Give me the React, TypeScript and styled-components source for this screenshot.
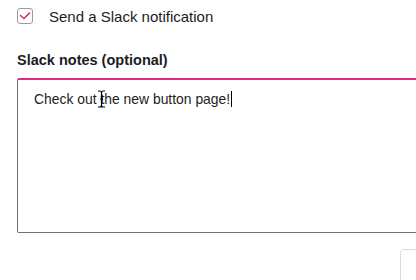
import React from "react";
import styled, { createGlobalStyle } from "styled-components";

const Global = createGlobalStyle`
  html, body { margin: 0; padding: 0; background: #fff; }
  body { font-family: "Liberation Sans", Arial, sans-serif; color: #1d1c1d; overflow: hidden; }
`;

const Page = styled.div`
  width: 416px;
  height: 280px;
  overflow: hidden;
  padding: 8px 0 0 17px;
  box-sizing: border-box;
  display: flex;
  flex-direction: column;
`;

const CheckRow = styled.label`
  display: flex;
  align-items: center;
  gap: 16px;
  height: 16px;
  flex: none;
  font-size: 15px;
  color: #1d1c1d;
`;

const Box = styled.span`
  width: 14px;
  height: 14px;
  border: 1px solid #9b9b9b;
  border-radius: 3px;
  display: flex;
  align-items: center;
  justify-content: center;
  flex: none;
`;

const FieldLabel = styled.div`
  margin-top: 27px;
  flex: none;
  font-size: 14.5px;
  font-weight: 700;
  line-height: 19px;
  color: #1d1c1d;
`;

const Area = styled.div`
  position: relative;
  margin-top: 8px;
  width: 420px;
  height: 155px;
  flex: none;
  box-sizing: border-box;
  border: 1px solid #6f6f6f;
  border-top: 2px solid #e0287e;
  border-radius: 2px;
  padding: 9px 16px;
  font-size: 13.9px;
  line-height: 20px;
  color: #1d1c1d;
`;

const Caret = styled.span`
  display: inline-block;
  width: 1px;
  height: 16px;
  margin-left: 1px;
  background: #000;
  vertical-align: -3px;
`;

const Cursor = styled.svg`
  position: absolute;
  left: 79px;
  top: 10px;
`;

const Footer = styled.div`
  display: flex;
  justify-content: flex-end;
  flex: none;
  margin-top: 16px;
`;

const GhostButton = styled.div`
  width: 30px;
  height: 40px;
  flex: none;
  margin-right: -16px;
  border: 1px solid #dddddd;
  border-radius: 4px;
`;

export default function App() {
  return (
    <>
      <Global />
      <Page>
        <CheckRow>
          <Box>
            <svg width="12" height="10" viewBox="0 0 12 10">
              <path d="M1.5 4.5 L5 7.5 L10.5 2" fill="none" stroke="#c8306f" strokeWidth="1.6" strokeLinecap="round" strokeLinejoin="round" />
            </svg>
          </Box>
          Send a Slack notification
        </CheckRow>
        <FieldLabel>Slack notes (optional)</FieldLabel>
        <Area>
          Check out the new button page!<Caret />
          <Cursor width="9" height="18" viewBox="0 0 9 18">
            <path d="M1 1 H3 Q4.5 1 4.5 3 V15 Q4.5 17 3 17 H1 M8 1 H6 Q4.5 1 4.5 3 M4.5 15 Q4.5 17 6 17 H8 M3 9 H6" fill="none" stroke="#000" strokeWidth="1.2" />
          </Cursor>
        </Area>
        <Footer>
          <GhostButton />
        </Footer>
      </Page>
    </>
  );
}
